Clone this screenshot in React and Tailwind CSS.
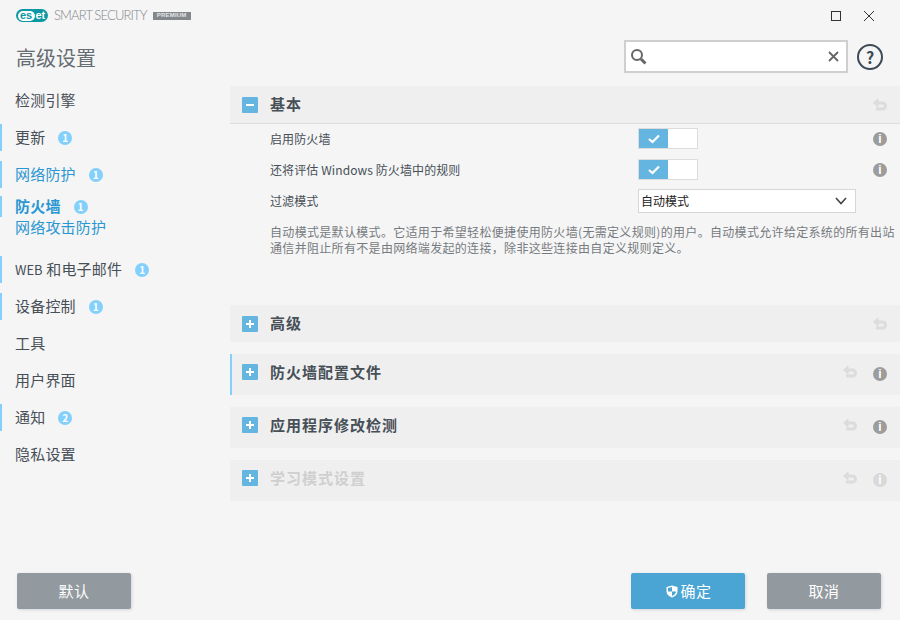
import React from "react";

const cjk = { fontFamily: '"Noto Sans CJK SC", "Noto Sans", sans-serif' };

const navItems = [
  { label: "检测引擎" },
  { label: "更新", badge: 1, bar: true },
  { label: "网络防护", badge: 1, bar: true, active: true },
];

const navItemsAfter = [
  {
    label: (
      <>
        <span className="text-[13px] tracking-[0px]">WEB</span> 和电子邮件
      </>
    ),
    key: "web",
    badge: 1,
    bar: true,
  },
  { label: "设备控制", badge: 1, bar: true },
  { label: "工具" },
  { label: "用户界面" },
  { label: "通知", badge: 2, bar: true },
  { label: "隐私设置" },
];

const Badge = ({ n }) => (
  <span className="ml-[13px] flex h-[14px] w-[14px] items-center justify-center rounded-full bg-[#82d0fb] text-[10px] font-bold leading-none text-white">
    {n}
  </span>
);

const NavItem = ({ label, badge, bar, active }) => (
  <div
    className={`flex h-[27px] items-center whitespace-pre border-l-2 pl-[13px] text-[15px] tracking-[0.2px] ${
      bar ? "border-[#82d0fb]" : "border-transparent"
    } ${active ? "text-[#2a97d2]" : "text-[#474f57]"}`}
  >
    {label}
    {badge && <Badge n={badge} />}
  </div>
);

const RevertIcon = () => (
  <svg width="15" height="14" viewBox="0 0 15 14" fill="none" stroke="#dcdcdc" strokeWidth="3">
    <path d="M4 5h6.5a2.8 2.8 0 0 1 0 6H4" />
    <path d="M6 1L1.5 5 6 9z" fill="#dcdcdc" strokeWidth="1" />
  </svg>
);

const InfoIcon = ({ light }) => (
  <span
    className={`flex h-[14px] w-[14px] items-center justify-center rounded-full text-[12px] font-bold leading-none text-white ${
      light ? "bg-[#d9d9d9]" : "bg-[#9c9c9c]"
    }`}
    style={{ fontFamily: '"Liberation Sans", sans-serif' }}
  >
    i
  </span>
);

const ExpandBox = ({ open }) => (
  <span className="flex h-4 w-4 shrink-0 items-center justify-center rounded-[1px] bg-[#64b6e0]">
    <svg width="10" height="10" viewBox="0 0 10 10" stroke="#fff" strokeWidth="2">
      <path d="M1 5h8" />
      {!open && <path d="M5 1v8" />}
    </svg>
  </span>
);

const SectionHeader = ({ title, open, bar, info, dim, tall, className = "" }) => (
  <div
    className={`flex items-center bg-[#efefef] ${tall ? "h-[41px] pb-[5px]" : "h-[37px]"} ${
      bar ? "border-l-2 border-[#82d0fb] pl-[10px]" : "pl-[12px]"
    } ${className}`}
  >
    <ExpandBox open={open} />
    <span
      className={`ml-[12px] text-[15px] font-bold tracking-[1px] ${
        dim ? "text-[#cfcfcf]" : "text-[#474f57]"
      }`}
    >
      {title}
    </span>
    <div className="ml-auto flex items-center">
      <RevertIcon />
      {info ? (
        <span className="ml-[16px] mr-[13px] mt-[4px]">
          <InfoIcon light={dim} />
        </span>
      ) : (
        <span className="mr-[13px]" />
      )}
    </div>
  </div>
);

const Toggle = () => (
  <div className="flex h-[21px] w-[60px] border border-[#dcdcdc] bg-white">
    <div className="flex w-[29px] items-center justify-center bg-[#64b6e0]">
      <svg width="12" height="10" viewBox="0 0 12 10" fill="none" stroke="#fff" strokeWidth="2.2">
        <path d="M1 5l3.5 3L11 1.5" />
      </svg>
    </div>
  </div>
);

const SettingRow = ({ label, info, children, className = "" }) => (
  <div className={`flex items-center ${className}`}>
    <span className="w-[368px] text-[12px] tracking-[0.1px] text-[#474f57]">{label}</span>
    {children}
    {info && (
      <span className="ml-auto mr-[13px]">
        <InfoIcon />
      </span>
    )}
  </div>
);

const Button = ({ children, blue }) => (
  <button
    className={`flex h-[36px] w-[114px] items-center justify-center rounded-[2px] text-[15px] tracking-[0.5px] text-white shadow-[1px_1px_3px_rgba(120,140,160,0.3)] ${
      blue ? "bg-[#4aa5d4]" : "bg-[#939a9f]"
    }`}
  >
    {children}
  </button>
);

export default function App() {
  return (
    <div className="flex h-[620px] w-[900px] flex-col overflow-hidden bg-[#f5f5f5]" style={cjk}>
      {/* title bar */}
      <div className="flex h-[30px] items-center pl-[16px] pr-[25px] pt-[1px]">
        <div className="flex h-[13px] w-[32px] items-center rounded-full bg-[#0b98a4] pl-[1.5px] text-[11px] font-bold leading-none">
          <span
            className="flex h-[10px] w-[17px] items-center justify-center rounded-full bg-white text-[#0b98a4]"
            style={{ fontFamily: '"Liberation Sans", sans-serif' }}
          >
            es
          </span>
          <span
            className="ml-[1px] text-white"
            style={{ fontFamily: '"Liberation Sans", sans-serif' }}
          >
            et
          </span>
        </div>
        <span
          className="ml-[6px] text-[13px] font-light tracking-[-0.85px] text-[#83888c]"
          style={{ fontFamily: 'Lato, "Noto Sans", sans-serif' }}
        >
          SMART SECURITY
        </span>
        <span
          className="ml-[6px] flex h-[8px] w-[38px] items-center justify-center bg-[#83888c] text-[6px] font-bold tracking-[0.2px] text-[#e6e6e6]"
          style={{ fontFamily: '"Liberation Sans", sans-serif' }}
        >
          PREMIUM
        </span>
        <div className="ml-auto flex items-center gap-[22px]">
          <span className="h-[10px] w-[10px] border border-[#333]" />
          <svg width="12" height="12" viewBox="0 0 12 12" stroke="#333" strokeWidth="1">
            <path d="M1 1l10 10M11 1L1 11" />
          </svg>
        </div>
      </div>

      {/* page heading + search */}
      <div className="flex h-[56px] items-start pl-[16px] pr-[17px] pt-[10px]">
        <h1 className="mt-[4px] text-[20px] leading-[28px] text-[#656d73]">高级设置</h1>
        <div className="ml-auto flex items-center">
          <div className="flex h-[33px] w-[224px] items-center justify-between border-2 border-[#cfcfcf] bg-white pl-[4px] pr-[7px]">
            <svg width="18" height="18" viewBox="0 0 18 18" fill="none" stroke="#666">
              <circle cx="7" cy="7" r="5" strokeWidth="2" />
              <path d="M11 11l4.5 4.5" strokeWidth="3" />
            </svg>
            <svg width="11" height="11" viewBox="0 0 11 11" stroke="#666" strokeWidth="1.8">
              <path d="M1 1l9 9M10 1l-9 9" />
            </svg>
          </div>
          <div className="ml-[9px] flex h-[26px] w-[26px] items-center justify-center rounded-full border-2 border-[#3d4a56] text-[16px] font-bold leading-none text-[#3d4a56]">
            ?
          </div>
        </div>
      </div>

      {/* body */}
      <div className="flex flex-1">
        <nav className="flex w-[230px] shrink-0 flex-col pt-[1px]">
          <div className="flex flex-col gap-[10px]">
            {navItems.map((item) => (
              <NavItem key={item.label} {...item} />
            ))}
          </div>
          <div className="mt-[8px] flex flex-col">
            <div className="flex h-[21px] items-center border-l-2 border-[#82d0fb] pl-[13px] text-[15px] font-bold tracking-[0.2px] text-[#2a97d2]">
              防火墙
              <Badge n={1} />
            </div>
            <div className="flex h-[21px] items-center pl-[15px] text-[15px] tracking-[0.2px] text-[#2a97d2]">
              网络攻击防护
            </div>
          </div>
          <div className="mt-[18px] flex flex-col gap-[10px]">
            {navItemsAfter.map(({ key, ...item }) => (
              <NavItem key={key || item.label} {...item} />
            ))}
          </div>
        </nav>

        <main className="flex-1">
          <SectionHeader title="基本" open className="h-[38px] border-b border-[#dedede]" />
          <div className="h-[181px] pl-[40px] pt-[4px]">
            <SettingRow label="启用防火墙" info>
              <Toggle />
            </SettingRow>
            <SettingRow label="还将评估 Windows 防火墙中的规则" info className="mt-[10px]">
              <Toggle />
            </SettingRow>
            <SettingRow label="过滤模式" className="mt-[9px]">
              <div className="flex h-[24px] w-[218px] items-center justify-between border border-[#d6d6d6] bg-white pl-[2px] pr-[8px] text-[12px] text-[#222]">
                自动模式
                <svg width="12" height="8" viewBox="0 0 12 8" fill="none" stroke="#444" strokeWidth="1.6">
                  <path d="M1 1l5 5.5L11 1" />
                </svg>
              </div>
            </SettingRow>
            <p className="mt-[11px] whitespace-nowrap text-[12px] leading-[16px] tracking-[0.32px] text-[#757b80]">
              自动模式是默认模式。它适用于希望轻松便捷使用防火墙(无需定义规则)的用户。自动模式允许给定系统的所有出站
              <br />
              通信并阻止所有不是由网络端发起的连接，除非这些连接由自定义规则定义。
            </p>
          </div>
          <SectionHeader title="高级" />
          <div className="mt-[12px] flex flex-col gap-[12px]">
            <SectionHeader title="防火墙配置文件" bar info tall />
            <SectionHeader title="应用程序修改检测" info tall />
            <SectionHeader title="学习模式设置" info dim tall />
          </div>
        </main>
      </div>

      {/* footer */}
      <div className="flex items-center justify-between pb-[11px] pl-[17px] pr-[19px]">
        <Button>默认</Button>
        <div className="flex gap-[22px]">
          <Button blue>
            <svg width="12" height="13" viewBox="0 0 12 13" className="mr-[2px] ml-[2px]">
              <path d="M6 .5L11.5 2v4.5c0 3-2.5 5-5.5 6-3-1-5.5-3-5.5-6V2z" fill="#fff" />
              <path d="M6 2v4.5H2V3zM6 6.5h4c0 2.2-2 3.6-4 4.4z" fill="#4aa5d4" />
            </svg>
            确定
          </Button>
          <Button>取消</Button>
        </div>
      </div>
    </div>
  );
}
